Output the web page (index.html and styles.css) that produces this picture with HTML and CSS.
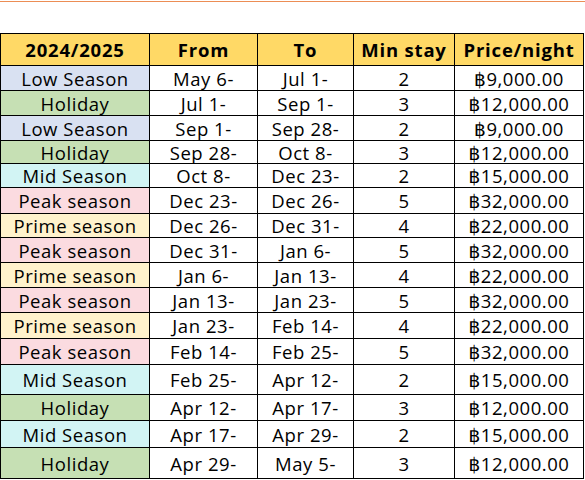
FILE: index.html
```html
<!DOCTYPE html>
<html>
<head>
<meta charset="utf-8">
<link rel="stylesheet" href="styles.css">
</head>
<body>
<div class="topline"></div>
<table class="rates">
  <colgroup>
    <col class="c1"><col class="c2"><col class="c3"><col class="c4"><col class="c5">
  </colgroup>
  <thead>
    <tr class="head"><th>2024/2025</th><th>From</th><th>To</th><th>Min stay</th><th>Price/night</th></tr>
  </thead>
  <tbody>
    <tr class="h25"><td class="low">Low Season</td><td>May 6-</td><td>Jul 1-</td><td>2</td><td>฿9,000.00</td></tr>
    <tr class="h25"><td class="hol">Holiday</td><td>Jul 1-</td><td>Sep 1-</td><td>3</td><td>฿12,000.00</td></tr>
    <tr class="h25"><td class="low">Low Season</td><td>Sep 1-</td><td>Sep 28-</td><td>2</td><td>฿9,000.00</td></tr>
    <tr class="h23"><td class="hol">Holiday</td><td>Sep 28-</td><td>Oct 8-</td><td>3</td><td>฿12,000.00</td></tr>
    <tr class="h24"><td class="mid">Mid Season</td><td>Oct 8-</td><td>Dec 23-</td><td>2</td><td>฿15,000.00</td></tr>
    <tr class="h26"><td class="peak">Peak season</td><td>Dec 23-</td><td>Dec 26-</td><td>5</td><td>฿32,000.00</td></tr>
    <tr class="h24"><td class="prime">Prime season</td><td>Dec 26-</td><td>Dec 31-</td><td>4</td><td>฿22,000.00</td></tr>
    <tr class="h25"><td class="peak">Peak season</td><td>Dec 31-</td><td>Jan 6-</td><td>5</td><td>฿32,000.00</td></tr>
    <tr class="h25"><td class="prime">Prime season</td><td>Jan 6-</td><td>Jan 13-</td><td>4</td><td>฿22,000.00</td></tr>
    <tr class="h25"><td class="peak">Peak season</td><td>Jan 13-</td><td>Jan 23-</td><td>5</td><td>฿32,000.00</td></tr>
    <tr class="h26"><td class="prime">Prime season</td><td>Jan 23-</td><td>Feb 14-</td><td>4</td><td>฿22,000.00</td></tr>
    <tr class="h26"><td class="peak">Peak season</td><td>Feb 14-</td><td>Feb 25-</td><td>5</td><td>฿32,000.00</td></tr>
    <tr class="h30"><td class="mid">Mid Season</td><td>Feb 25-</td><td>Apr 12-</td><td>2</td><td>฿15,000.00</td></tr>
    <tr class="h26"><td class="hol">Holiday</td><td>Apr 12-</td><td>Apr 17-</td><td>3</td><td>฿12,000.00</td></tr>
    <tr class="h27"><td class="mid">Mid Season</td><td>Apr 17-</td><td>Apr 29-</td><td>2</td><td>฿15,000.00</td></tr>
    <tr class="h31"><td class="hol">Holiday</td><td>Apr 29-</td><td>May 5-</td><td>3</td><td>฿12,000.00</td></tr>
  </tbody>
</table>
</body>
</html>
```
FILE: styles.css
```css
html, body {
  margin: 0;
  padding: 0;
  background: #ffffff;
}
body {
  font-family: "Open Sans", "Noto Sans", "DejaVu Sans", sans-serif;
  color: #000000;
}
.topline {
  height: 1px;
  margin-top: 1px;
  background: #ec8d55;
}
.rates {
  margin-top: 31px;
  border-collapse: collapse;
  table-layout: fixed;
  width: 583px;
  font-size: 18.5px;
  letter-spacing: 0.55px;
}
.c1 { width: 149px; }
.c2 { width: 108px; }
.c3 { width: 96px; }
.c4 { width: 101px; }
.c5 { width: 129px; }
.rates th, .rates td {
  border: 1px solid #000000;
  padding: 0;
  text-align: center;
  vertical-align: middle;
  line-height: 20px;
  white-space: nowrap;
  overflow: hidden;
}
.rates td {
  padding-top: 1px;
}
.rates th {
  font-weight: 700;
  font-size: 18.5px;
  letter-spacing: 0.8px;
  background: #ffd966;
}
.head { height: 32px; }
.h23 { height: 23px; }
.h24 { height: 24px; }
.h25 { height: 25px; }
.h26 { height: 26px; }
.h27 { height: 27px; }
.h30 { height: 30px; }
.h31 { height: 31px; }
.low { background: #d9e1f2; }
.hol { background: #c6e0b4; }
.mid { background: #d2f4f4; }
.peak { background: #fbdbe0; }
.prime { background: #fff2cc; }
```
